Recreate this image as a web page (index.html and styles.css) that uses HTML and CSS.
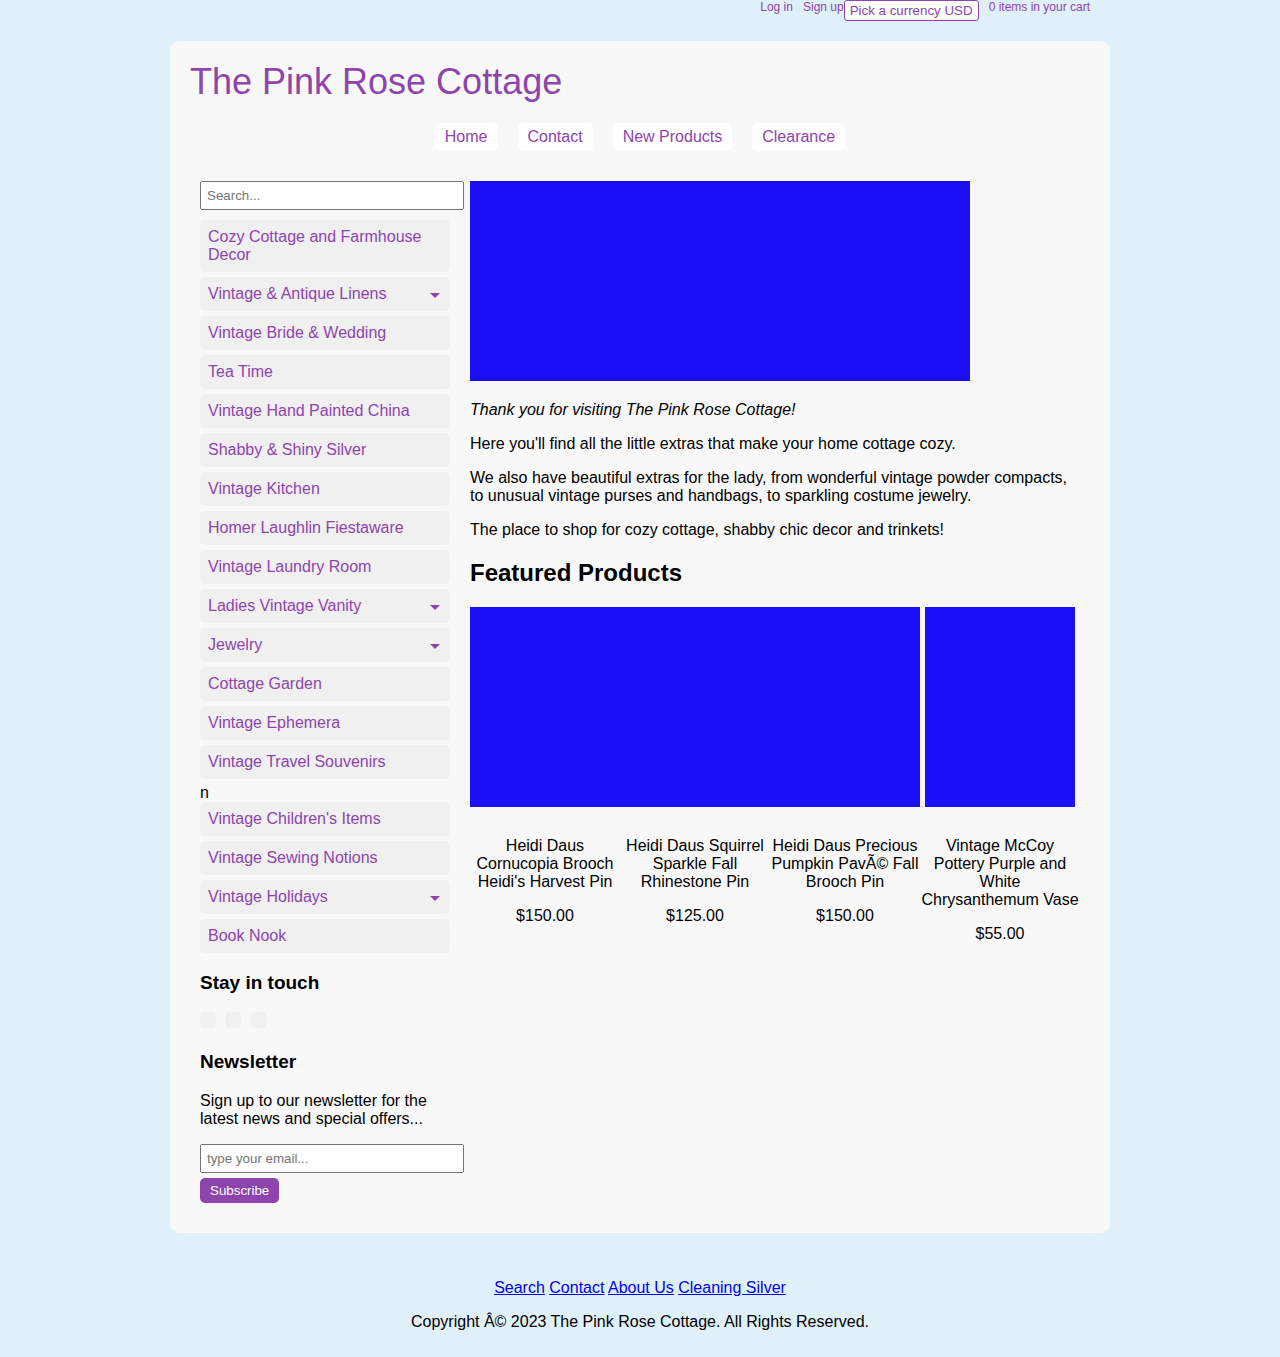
FILE: index.html
```html
<!DOCTYPE html>
<html lang="en">
<head>
<meta charset="utf-8">
<meta name="viewport" content="width=device-width, initial-scale=1">
<title>The Pink Rose Cottage</title>
<link rel="stylesheet" href="styles.css">
</head>
<body>
<div class="topbar">
  <a href="#">Log in</a>
  <a href="#">Sign up</a>
  <button type="button" class="currency">Pick a currency USD</button>
  <a href="#">0 items in your cart</a>
</div>
<div class="container">
  <header>
    <a class="logo" href="#">The Pink Rose Cottage</a>
    <nav class="main-nav">
      <a href="#">Home</a>
      <a href="#">Contact</a>
      <a href="#">New Products</a>
      <a href="#">Clearance</a>
    </nav>
  </header>
  <div class="columns">
    <aside class="sidebar">
      <form class="search"><input type="text" class="field" placeholder="Search..." aria-label="Search"></form>
      <ul class="categories">
        <li><a href="#">Cozy Cottage and Farmhouse Decor</a></li>
        <li><a href="#">Vintage &amp; Antique Linens<span class="caret"></span></a></li>
        <li><a href="#">Vintage Bride &amp; Wedding</a></li>
        <li><a href="#">Tea Time</a></li>
        <li><a href="#">Vintage Hand Painted China</a></li>
        <li><a href="#">Shabby &amp; Shiny Silver</a></li>
        <li><a href="#">Vintage Kitchen</a></li>
        <li><a href="#">Homer Laughlin Fiestaware</a></li>
        <li><a href="#">Vintage Laundry Room</a></li>
        <li><a href="#">Ladies Vintage Vanity<span class="caret"></span></a></li>
        <li><a href="#">Jewelry<span class="caret"></span></a></li>
        <li><a href="#">Cottage Garden</a></li>
        <li><a href="#">Vintage Ephemera</a></li>
        <li><a href="#">Vintage Travel Souvenirs</a></li>
        <li>n<a href="#">Vintage Children's Items</a></li>
        <li><a href="#">Vintage Sewing Notions</a></li>
        <li><a href="#">Vintage Holidays<span class="caret"></span></a></li>
        <li><a href="#">Book Nook</a></li>
      </ul>
      <h3>Stay in touch</h3>
      <div class="social">
        <a href="#" aria-label="Facebook"></a>
        <a href="#" aria-label="Twitter"></a>
        <a href="#" aria-label="Pinterest"></a>
      </div>
      <h3>Newsletter</h3>
      <p>Sign up to our newsletter for the latest news and special offers...</p>
      <form class="newsletter">
        <input type="email" class="field" placeholder="type your email..." aria-label="Email">
        <button type="submit" class="subscribe">Subscribe</button>
      </form>
    </aside>
    <main class="content">
      <div class="banner"></div>
      <p><em>Thank you for visiting The Pink Rose Cottage!</em></p>
      <p>Here you'll find all the little extras that make your home cottage cozy.</p>
      <p>We also have beautiful extras for the lady, from wonderful vintage powder compacts, to unusual vintage purses and handbags, to sparkling costume jewelry.</p>
      <p>The place to shop for cozy cottage, shabby chic decor and trinkets!</p>
      <h2>Featured Products</h2>
      <div class="products">
        <div class="product"><div class="photo"></div><p>Heidi Daus Cornucopia Brooch Heidi's Harvest Pin</p><p>$150.00</p></div>
        <div class="product"><div class="photo"></div><p>Heidi Daus Squirrel Sparkle Fall Rhinestone Pin</p><p>$125.00</p></div>
        <div class="product"><div class="photo"></div><p>Heidi Daus Precious Pumpkin PavÃ© Fall Brooch Pin</p><p>$150.00</p></div>
        <div class="product product-wide"><div class="photo"></div><p>Vintage McCoy Pottery Purple and White Chrysanthemum&nbsp;Vase</p><p>$55.00</p></div>
      </div>
    </main>
  </div>
</div>
<footer class="footer">
  <div>
    <a href="#">Search</a>
    <a href="#">Contact</a>
    <a href="#">About Us</a>
    <a href="#">Cleaning Silver</a>
  </div>
  <p>Copyright Â© 2023 The Pink Rose Cottage. All Rights Reserved.</p>
</footer>
</body>
</html>
```
FILE: styles.css
```css
body {
  margin: 0;
  background: #e0f0f8;
  color: #000;
  font-family: "Liberation Sans", Arial, sans-serif;
  font-size: 16px;
  line-height: 18px;
}

p {
  margin: 16px 0;
}

h2 {
  margin: 20px 0;
  font-size: 24px;
  line-height: 28px;
}

h3 {
  margin: 19px 0;
  font-size: 19px;
  line-height: 21px;
}

.topbar {
  display: flex;
  justify-content: flex-end;
  align-items: flex-start;
  max-width: 900px;
  margin: 0 auto 20px;
  font-size: 12px;
  line-height: 14px;
}

.topbar a {
  margin-left: 10px;
  color: #8e44ad;
  text-decoration: none;
}

.currency {
  padding: 2px 5px;
  border: 1px solid #8e44ad;
  border-radius: 3px;
  background: #fff;
  color: #8e44ad;
}

.container {
  box-sizing: border-box;
  max-width: 940px;
  margin: 0 auto;
  padding: 20px;
  border-radius: 10px;
  background: #f8f8f8;
}

.logo {
  display: block;
  color: #8e44ad;
  font-size: 36px;
  line-height: 42px;
  text-decoration: none;
}

.main-nav {
  display: flex;
  flex-wrap: wrap;
  justify-content: center;
  gap: 20px;
  margin: 20px 0;
}

.main-nav a {
  padding: 5px 10px;
  border-radius: 5px;
  background: #fff;
  color: #8e44ad;
  text-decoration: none;
}

.columns {
  display: flex;
  gap: 20px;
  padding: 10px;
}

.sidebar {
  flex: 0 0 250px;
}

.sidebar p {
  margin-top: 20px;
}

.field {
  display: block;
  width: 100%;
  padding: 5px;
}

.search {
  margin-bottom: 10px;
}

.categories {
  margin: 0;
  padding: 0;
  list-style: none;
}

.categories li {
  margin-bottom: 5px;
}

.categories a {
  display: flex;
  justify-content: space-between;
  align-items: center;
  padding: 8px;
  border-radius: 5px;
  background: #f0f0f0;
  color: #8e44ad;
  text-decoration: none;
}

.caret {
  margin: 3px 2px 0 0;
  border: 5px solid transparent;
  border-top-color: #8e44ad;
  border-bottom: 0;
}

.social a {
  display: inline-block;
  width: 16px;
  height: 16px;
  margin-right: 5px;
  border-radius: 5px;
  background: #f0f0f0;
}

.newsletter {
  display: flex;
  flex-direction: column;
  align-items: flex-start;
}

.subscribe {
  margin-top: 5px;
  padding: 5px 10px;
  border: 0;
  border-radius: 5px;
  background: #8e44ad;
  color: #fff;
}

.content {
  flex: 1;
  min-width: 0;
}

.banner {
  max-width: 500px;
  height: 200px;
  margin-bottom: 20px;
  background: #1b0ff8;
}

.products {
  display: flex;
}

.product {
  flex: 1 0 150px;
  text-align: center;
}

.product-wide {
  flex-basis: 160px;
}

.photo {
  width: 150px;
  height: 200px;
  margin: 0 auto 30px;
  background: #1b0ff8;
}

.footer {
  padding: 46px 20px 10px;
  text-align: center;
}

.footer a {
  color: #0000ee;
}
```
